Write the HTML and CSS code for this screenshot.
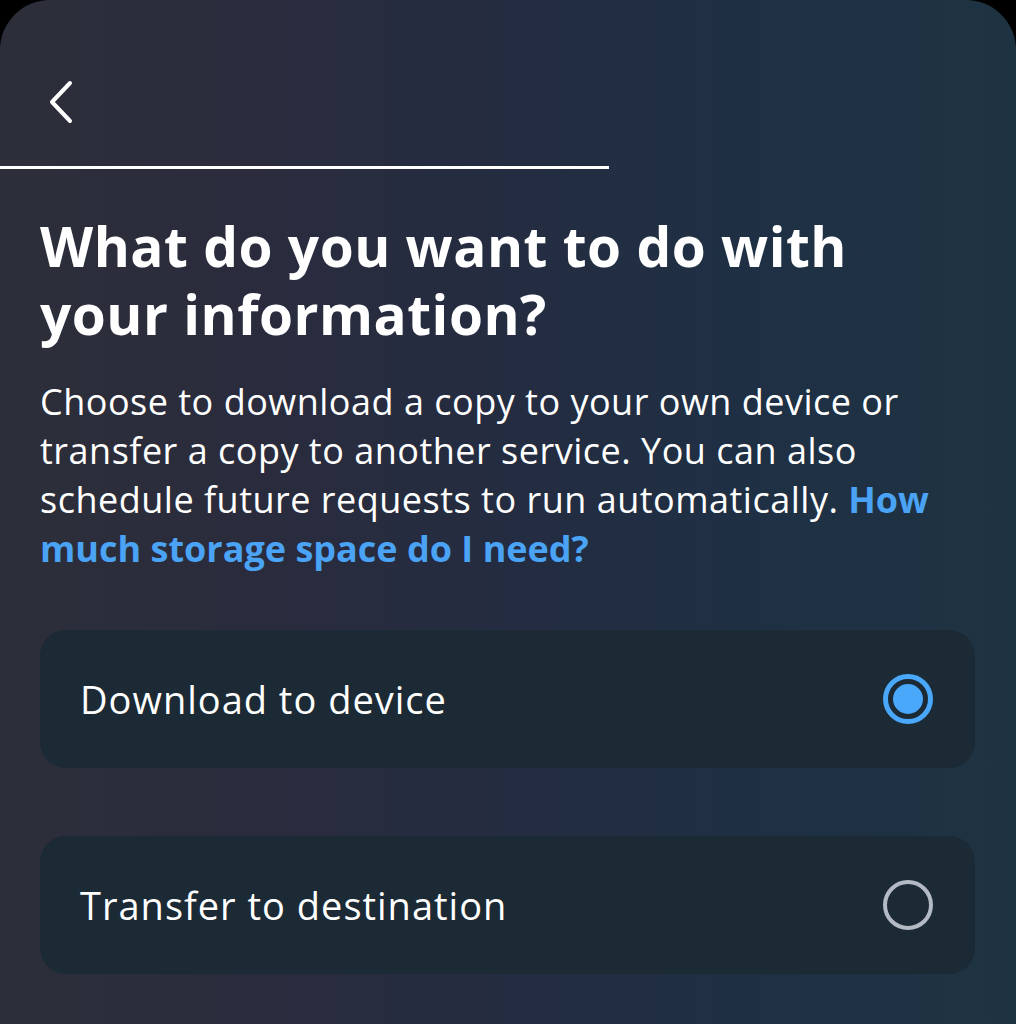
FILE: index.html
```html
<!DOCTYPE html>
<html lang="en">
<head>
<meta charset="utf-8">
<title>Download your information</title>
<link rel="stylesheet" href="styles.css">
</head>
<body>
<div class="screen">
  <header class="topbar">
    <button class="back" aria-label="Back">
      <svg width="30" height="44" viewBox="0 0 30 44"><path d="M24 3 L6 22 L24 41" fill="none" stroke="#ffffff" stroke-width="4" stroke-linecap="round" stroke-linejoin="round"/></svg>
    </button>
  </header>
  <div class="progress"><div class="progress-fill"></div></div>
  <main class="content">
    <h1 class="title">What do you want to do with your information?</h1>
    <p class="desc">Choose to download a copy to your own device or transfer a copy to another service. You can also schedule future requests to run automatically. <a class="link" href="#">How much storage space do I need?</a></p>
    <div class="options">
      <label class="option">
        <span class="option-label">Download to device</span>
        <span class="radio radio-on"><span class="radio-dot"></span></span>
      </label>
      <label class="option">
        <span class="option-label">Transfer to destination</span>
        <span class="radio"></span>
      </label>
    </div>
  </main>
</div>
</body>
</html>
```
FILE: styles.css
```css
html, body {
  margin: 0;
  padding: 0;
  background: #000;
}
body {
  width: 1016px;
  height: 1024px;
  overflow: hidden;
  font-family: "Open Sans", "Noto Sans", sans-serif;
  color: #ffffff;
}
.screen {
  height: 1024px;
  border-radius: 50px 50px 0 0;
  background: linear-gradient(90deg, #2c2e39 0%, #2a2c3d 25%, #242c41 50%, #1f3044 75%, #1e3342 100%);
  overflow: hidden;
}
.topbar {
  height: 166px;
  display: flex;
  align-items: flex-start;
  padding-left: 46px;
  box-sizing: border-box;
  padding-top: 80px;
}
.back {
  background: none;
  border: 0;
  padding: 0;
  width: 30px;
  height: 44px;
  display: block;
}
.back svg { display: block; }
.progress {
  height: 3px;
}
.progress-fill {
  width: 609px;
  height: 3px;
  background: #ffffff;
}
.content {
  padding: 0 41px 0 40px;
}
.title {
  margin: 43px 0 0;
  max-width: 860px;
  font-size: 55px;
  line-height: 68px;
  font-weight: 700;
  letter-spacing: 0.5px;
}
.desc {
  margin: 29px 0 0;
  font-size: 36px;
  line-height: 49px;
  font-weight: 400;
  letter-spacing: 0.5px;
}
.link {
  color: #4aa3f4;
  font-weight: 700;
  letter-spacing: 0;
  text-decoration: none;
}
.options {
  margin-top: 57px;
  display: flex;
  flex-direction: column;
  gap: 68px;
}
.option {
  height: 138px;
  border-radius: 26px;
  background: #1b2a35;
  display: flex;
  align-items: center;
  justify-content: space-between;
  padding: 0 42px 0 40px;
  box-sizing: border-box;
}
.option-label {
  font-size: 38px;
  font-weight: 400;
  letter-spacing: 1px;
}
.radio {
  width: 50px;
  height: 50px;
  border-radius: 50%;
  border: 4px solid #b3bac3;
  box-sizing: border-box;
  display: flex;
  align-items: center;
  justify-content: center;
}
.radio-on {
  border: 5px solid #4aa8fa;
}
.radio-dot {
  width: 30px;
  height: 30px;
  border-radius: 50%;
  background: #4aa8fa;
}
```
